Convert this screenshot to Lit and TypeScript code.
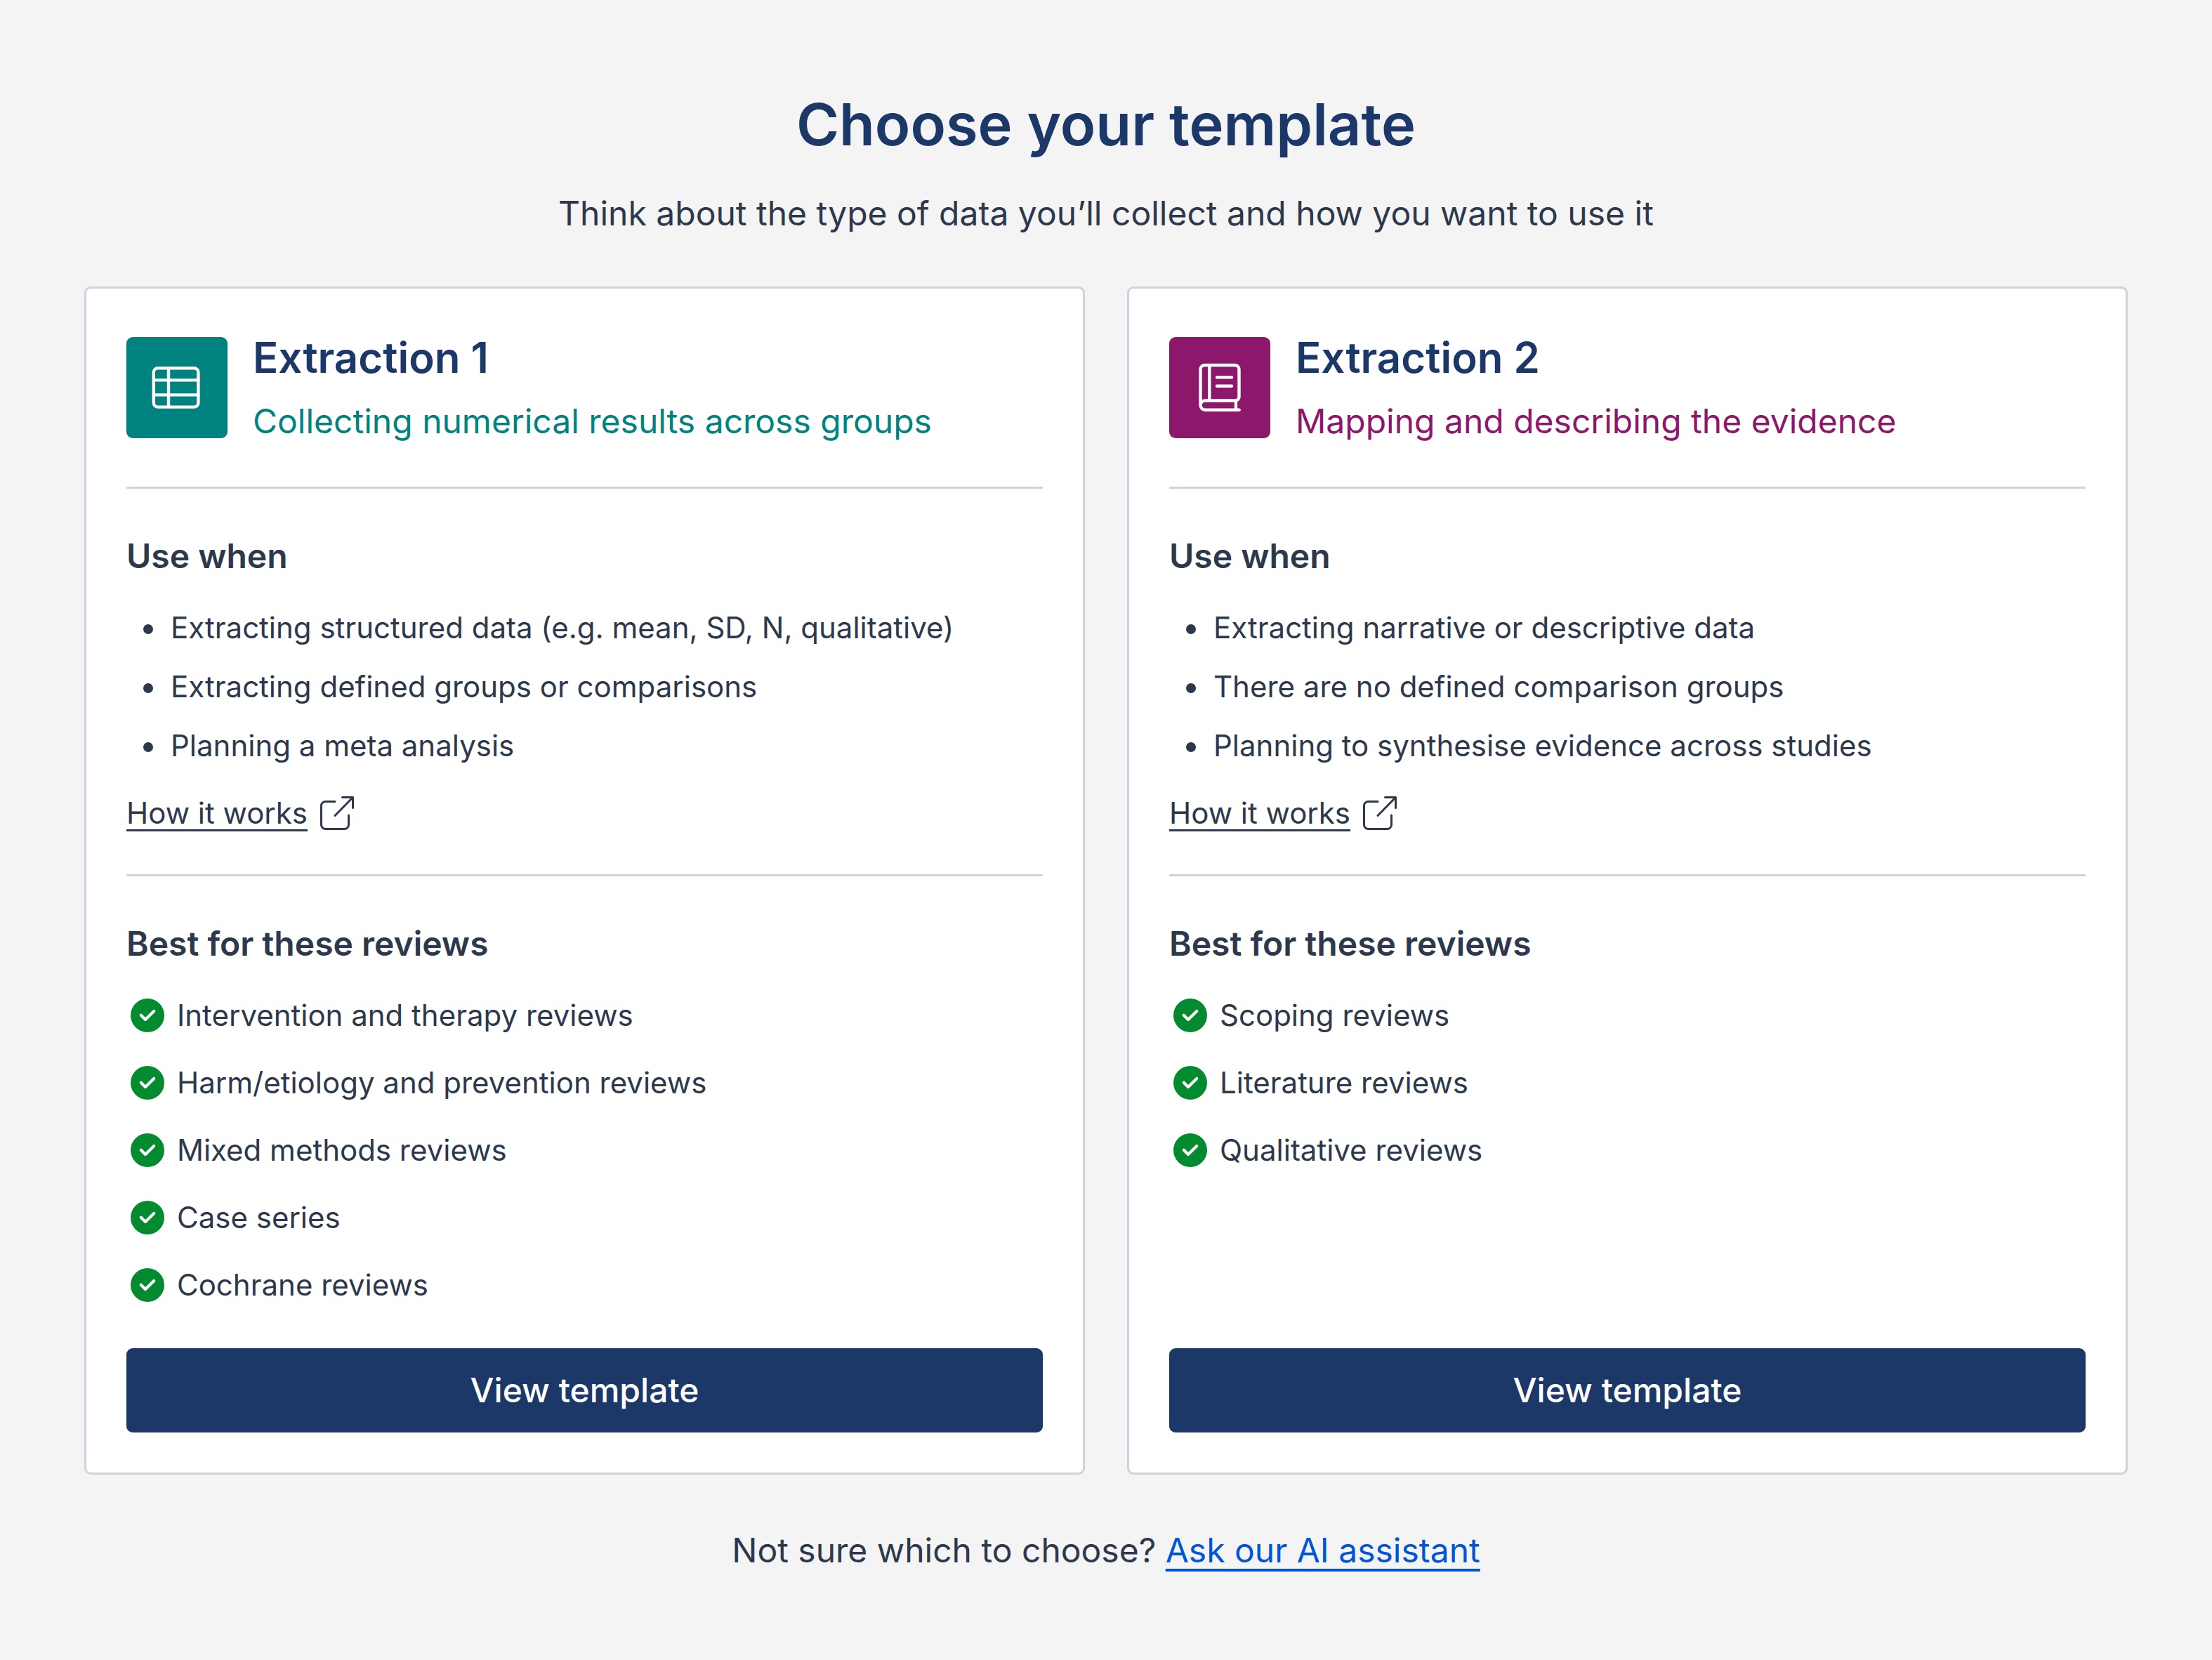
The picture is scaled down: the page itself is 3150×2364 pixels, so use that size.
import { LitElement, html, css, svg } from "lit";
import { customElement, property } from "lit/decorators.js";

interface Template {
  name: string;
  summary: string;
  theme: "teal" | "plum";
  useWhen: string[];
  reviews: string[];
}

const TEMPLATES: Template[] = [
  {
    name: "Extraction 1",
    summary: "Collecting numerical results across groups",
    theme: "teal",
    useWhen: [
      "Extracting structured data (e.g. mean, SD, N, qualitative)",
      "Extracting defined groups or comparisons",
      "Planning a meta analysis",
    ],
    reviews: [
      "Intervention and therapy reviews",
      "Harm/etiology and prevention reviews",
      "Mixed methods reviews",
      "Case series",
      "Cochrane reviews",
    ],
  },
  {
    name: "Extraction 2",
    summary: "Mapping and describing the evidence",
    theme: "plum",
    useWhen: [
      "Extracting narrative or descriptive data",
      "There are no defined comparison groups",
      "Planning to synthesise evidence across studies",
    ],
    reviews: ["Scoping reviews", "Literature reviews", "Qualitative reviews"],
  },
];

const tableGlyph = svg`
  <rect x="38.8" y="44.3" width="63.6" height="55.3" rx="6" />
  <path d="M38.8 61.4H102.4M38.8 82.4H102.4M60 44.3V99.6" />`;

const bookGlyph = svg`
  <path d="M94 90.5H51a6.5 6.5 0 0 0-6.5 6.5M44.5 97.5V46a6 6 0 0 1 6-6H93.5a6 6 0 0 1 6 6V85a5.5 5.5 0 0 1-5.5 5.5M44.5 97a6.7 6.7 0 0 0 6.7 6.7H99.7M95 90.5V103.7M57.3 40V90.5M68 57.4H89M68 69.7H89" />`;

@customElement("template-card")
export class TemplateCard extends LitElement {
  @property({ attribute: false }) template!: Template;

  static styles = css`
    :host {
      display: flex;
      flex-direction: column;
      box-sizing: border-box;
      padding: 57px;
      background: #ffffff;
      border: 3px solid #ccd3de;
      border-radius: 9px;
    }
    h2,
    h3,
    p,
    ul {
      margin: 0;
      padding: 0;
    }
    .header {
      display: flex;
      align-items: center;
      gap: 36px;
      padding-bottom: 57px;
    }
    .badge {
      flex: none;
      width: 144px;
      height: 144px;
      border-radius: 9px;
    }
    .badge svg {
      display: block;
      fill: none;
      stroke: #ffffff;
      stroke-width: 4.4;
      stroke-linecap: round;
      stroke-linejoin: round;
    }
    .heading {
      display: flex;
      flex-direction: column;
      gap: 14px;
    }
    .name {
      font-size: 60px;
      line-height: 82px;
      font-weight: 600;
      color: #1b3868;
    }
    .summary {
      font-size: 48px;
      line-height: 72px;
    }
    .teal .badge {
      background: #00827f;
    }
    .teal .summary {
      color: #00827f;
    }
    .plum .badge {
      background: #8c176b;
    }
    .plum .summary {
      color: #8c176b;
    }
    .section {
      display: flex;
      flex-direction: column;
      gap: 36px;
      padding: 60px 0 57px;
      border-top: 3px solid #ccd3de;
    }
    .section-title {
      font-size: 48px;
      line-height: 72px;
      font-weight: 600;
    }
    .bullets {
      display: flex;
      flex-direction: column;
      gap: 24px;
      padding-left: 58px;
    }
    .bullets li {
      padding-left: 5px;
    }
    .how {
      display: flex;
      align-items: center;
      gap: 12px;
      align-self: flex-start;
      color: inherit;
      text-decoration: none;
    }
    .how-text {
      text-decoration: underline;
      text-decoration-thickness: 3px;
      text-underline-offset: 8px;
      text-decoration-skip-ink: none;
    }
    .how svg {
      fill: none;
      stroke: currentColor;
      stroke-width: 3;
      stroke-linecap: round;
      stroke-linejoin: round;
    }
    .reviews {
      display: flex;
      flex-direction: column;
      gap: 36px;
      list-style: none;
    }
    .review {
      display: flex;
      align-items: center;
      gap: 12px;
    }
    .last {
      flex: 1;
      padding-bottom: 60px;
    }
    .view {
      height: 120px;
      border: 0;
      border-radius: 9px;
      background: #1b3868;
      color: #ffffff;
      font: inherit;
      font-size: 48px;
      font-weight: 500;
      cursor: pointer;
    }
  `;

  render() {
    const t = this.template;
    return html`
      <header class="header ${t.theme}">
        <div class="badge">
          <svg width="144" height="144" viewBox="0 0 144 144" aria-hidden="true">
            ${t.theme === "teal" ? tableGlyph : bookGlyph}
          </svg>
        </div>
        <div class="heading">
          <h2 class="name">${t.name}</h2>
          <p class="summary">${t.summary}</p>
        </div>
      </header>
      <section class="section">
        <h3 class="section-title">Use when</h3>
        <ul class="bullets">
          ${t.useWhen.map((item) => html`<li>${item}</li>`)}
        </ul>
        <a class="how" href="#how-it-works">
          <span class="how-text">How it works</span>
          <svg width="60" height="60" viewBox="0 0 60 60" aria-hidden="true">
            <path
              d="M27 13.5H13.5a6 6 0 0 0-6 6V46.5a6 6 0 0 0 6 6H40.5a6 6 0 0 0 6-6V33M27 33.5L52.5 7.5M37.5 7.5H52.5V22.5"
            />
          </svg>
        </a>
      </section>
      <section class="section last">
        <h3 class="section-title">Best for these reviews</h3>
        <ul class="reviews">
          ${t.reviews.map(
            (item) => html`<li class="review">
              <svg width="60" height="60" viewBox="0 0 60 60" aria-hidden="true">
                <circle cx="30" cy="30" r="24" fill="#048a2f" />
                <path
                  d="M20.8 29.8L27 36L39.2 24"
                  fill="none"
                  stroke="#ffffff"
                  stroke-width="4.2"
                  stroke-linecap="round"
                  stroke-linejoin="round"
                />
              </svg>
              <span>${item}</span>
            </li>`
          )}
        </ul>
      </section>
      <button class="view" type="button">View template</button>
    `;
  }
}

@customElement("app-root")
export class AppRoot extends LitElement {
  static styles = css`
    :host {
      display: block;
      box-sizing: border-box;
      min-height: 100vh;
      padding: 120px;
      background: #f4f4f4;
      color: #2d384d;
      font-family: Inter, "Liberation Sans", sans-serif;
      font-size: 42px;
      line-height: 60px;
    }
    h1,
    p {
      margin: 0;
    }
    .intro {
      display: flex;
      flex-direction: column;
      gap: 34px;
      padding-bottom: 68px;
      text-align: center;
    }
    .title {
      font-size: 83px;
      line-height: 114px;
      font-weight: 600;
      color: #1b3868;
    }
    .lead {
      font-size: 48px;
      line-height: 72px;
    }
    .cards {
      display: grid;
      grid-template-columns: repeat(auto-fit, minmax(min(100%, 1200px), 1fr));
      gap: 60px;
    }
    .help {
      padding-top: 72px;
      text-align: center;
    }
    .ask {
      color: #0055d6;
      text-decoration: underline;
      text-decoration-thickness: 4px;
      text-underline-offset: 9px;
      text-decoration-skip-ink: none;
    }
  `;

  render() {
    return html`
      <main>
        <div class="intro">
          <h1 class="title">Choose your template</h1>
          <p class="lead">Think about the type of data you’ll collect and how you want to use it</p>
        </div>
        <div class="cards">
          ${TEMPLATES.map((t) => html`<template-card .template=${t}></template-card>`)}
        </div>
        <p class="lead help">
          Not sure which to choose?
          <a class="ask" href="#assistant">Ask our AI assistant</a>
        </p>
      </main>
    `;
  }
}
